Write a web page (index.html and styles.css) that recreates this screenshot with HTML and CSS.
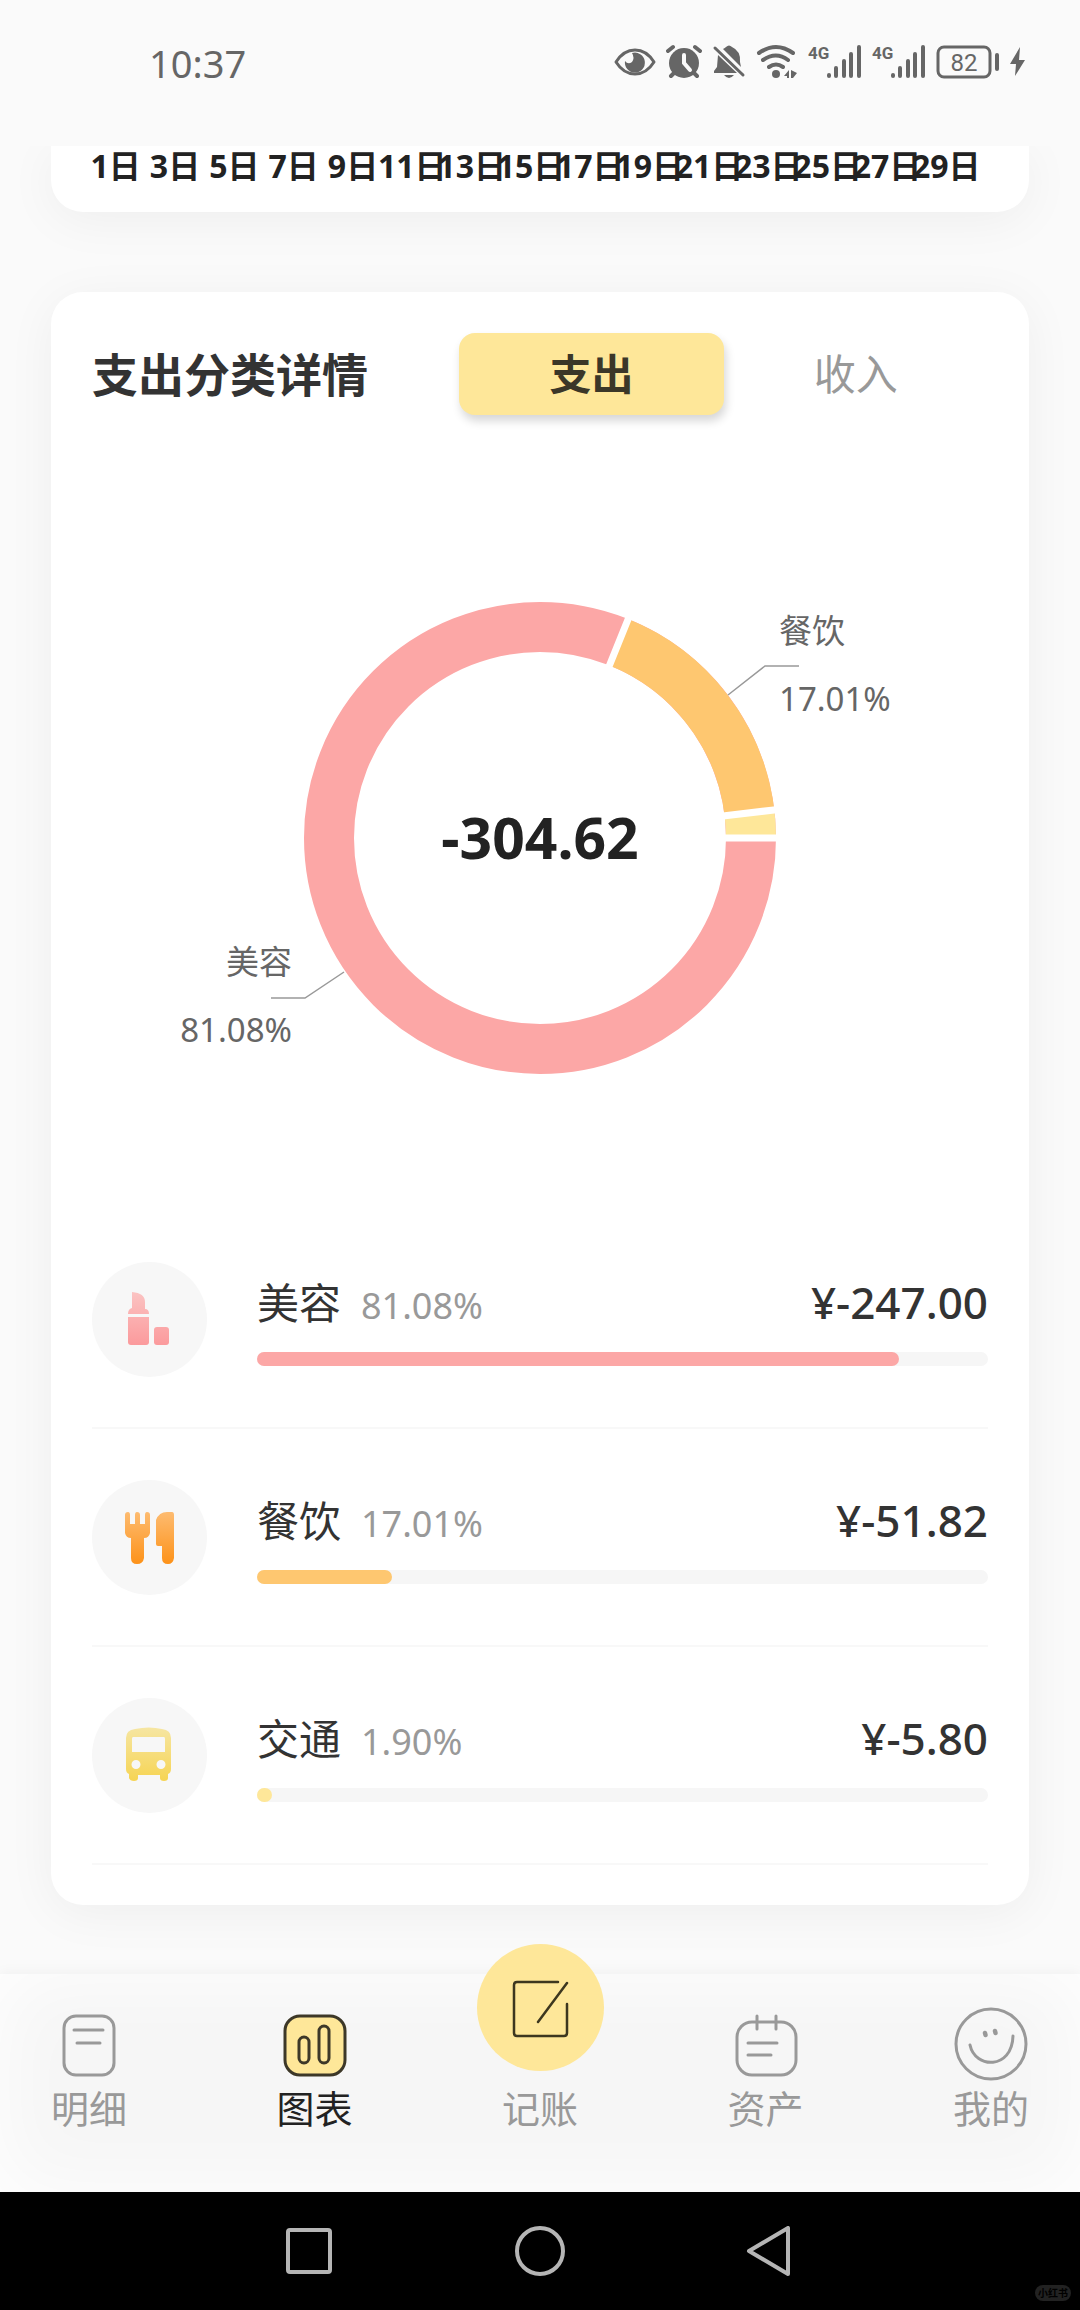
FILE: index.html
```html
<!DOCTYPE html>
<html lang="zh-CN">
<head>
<meta charset="utf-8">
<meta name="viewport" content="width=device-width, initial-scale=1">
<title>图表</title>
<link rel="stylesheet" href="styles.css">
</head>
<body>
<header class="status">
  <time class="clock">10:37</time>
  <div class="status-icons">
    <svg width="42" height="36" viewBox="0 0 42 36" aria-hidden="true">
      <path d="M2 18C12 2 30 2 40 18C30 34 12 34 2 18Z" fill="none" stroke="#666" stroke-width="3" stroke-linejoin="round"/>
      <path d="M18 9A10 10 0 1 1 11 17Q14 21 18 18Q21 14 18 9Z" fill="#666"/>
    </svg>
    <svg width="36" height="36" viewBox="0 0 36 36" aria-hidden="true">
      <circle cx="18" cy="19" r="15" fill="#666"/>
      <path d="M2 7L7 3M34 7L29 3M8 29L5 32M28 29L31 32" stroke="#666" stroke-width="4" stroke-linecap="round"/>
      <path d="M18 11V19L24 26" fill="none" stroke="#fafafa" stroke-width="4" stroke-linecap="round"/>
    </svg>
    <svg width="34" height="36" viewBox="0 0 34 36" aria-hidden="true">
      <path d="M6 11L25 29H2V27L5 23ZM11 5Q13 4 14 3Q17 0 20 3Q29 7 28 18L29 23Z" fill="#666"/>
      <path d="M12 31H22Q17 37 12 31Z" fill="#666"/>
      <path d="M3 4L31 31" stroke="#666" stroke-width="3" stroke-linecap="round"/>
    </svg>
    <svg width="42" height="36" viewBox="0 0 42 36" aria-hidden="true">
      <path d="M3 9Q20 -3 37 9M7 16Q20 7 32 16M13 23Q20 18 27 23" fill="none" stroke="#666" stroke-width="4" stroke-linecap="round"/>
      <circle cx="20" cy="30" r="4" fill="#666"/>
      <path d="M33 26V34H31V32H28ZM35 26L41 29L37 34H35Z" fill="#666"/>
    </svg>
    <svg class="signal" width="54" height="36" viewBox="0 0 54 36" aria-label="4G">
      <text x="0" y="15">4G</text>
      <path d="M21 31V32M28 24V32M36 17V32M43 10V32M51 3V32" stroke="#666" stroke-width="4" stroke-linecap="round"/>
    </svg>
    <svg class="signal" width="54" height="36" viewBox="0 0 54 36" aria-label="4G">
      <text x="0" y="15">4G</text>
      <path d="M21 31V32M28 24V32M36 17V32M43 10V32M51 3V32" stroke="#666" stroke-width="4" stroke-linecap="round"/>
    </svg>
    <svg class="battery" width="64" height="36" viewBox="0 0 64 36" aria-label="82%">
      <rect x="2" y="3" width="52" height="30" rx="6" fill="none" stroke="#666" stroke-width="3"/>
      <text x="28" y="27" text-anchor="middle">82</text>
      <path d="M61 11V25" stroke="#666" stroke-width="4" stroke-linecap="round"/>
    </svg>
    <svg width="16" height="36" viewBox="0 0 16 36" aria-hidden="true">
      <path d="M10 3L0 20H6L5 32L15 16H9Z" fill="#666"/>
    </svg>
  </div>
</header>

<main class="content">
  <section class="card card-days">
    <ol class="days">
      <li>1日</li><li>3日</li><li>5日</li><li>7日</li><li>9日</li><li>11日</li><li>13日</li><li>15日</li><li>17日</li><li>19日</li><li>21日</li><li>23日</li><li>25日</li><li>27日</li><li>29日</li>
    </ol>
  </section>

  <section class="card card-detail">
    <div class="card-head">
      <h1 class="title">支出分类详情</h1>
      <div class="tabs">
        <button class="tab tab-active" type="button">支出</button>
        <button class="tab" type="button">收入</button>
      </div>
    </div>

    <svg class="donut" viewBox="0 -1 896 796" role="img" aria-label="支出占比">
      <g fill="none" stroke-width="50">
        <circle cx="448" cy="422" r="211" stroke="#fca7a6"/>
        <path d="M526.8 226.300A211 211 0 0 1 657.500 396.900" stroke="#fec770"/>
        <path d="M657.500 396.900A211 211 0 0 1 659 422" stroke="#fee799"/>
      </g>
      <path d="M630 422H688M628.700 400.300L686.300 393.400M515.900 253.200L537.600 199.500" stroke="#fff" stroke-width="7"/>
      <path d="M636 279L673 250H707M252 556L213 582H179" fill="none" stroke="#999" stroke-width="1.500"/>
      <text class="donut-total" x="448" y="443">-304.62</text>
      <text class="donut-label" x="687" y="227">餐饮</text>
      <text class="donut-label" x="687" y="295">17.01%</text>
      <text class="donut-label end" x="200" y="558">美容</text>
      <text class="donut-label end" x="200" y="626">81.08%</text>
    </svg>

    <ul class="list">
      <li class="row">
        <svg class="badge" viewBox="0 0 115 115" aria-hidden="true">
          <defs><linearGradient id="pink" gradientUnits="userSpaceOnUse" x1="0" y1="29" x2="0" y2="83"><stop offset="0" stop-color="#fbc4c3"/><stop offset="1" stop-color="#fb9a9c"/></linearGradient></defs>
          <g fill="url(#pink)">
            <path d="M40 30Q53 31 53 40V47Q57 47 57 52H36Q36 47 40 46Z"/>
            <path d="M36 55H57V80Q57 83 54 83H39Q36 83 36 80Z"/>
            <rect x="62" y="65" width="15" height="18" rx="3"/>
          </g>
        </svg>
        <div class="info">
          <div class="line"><span class="name">美容</span><span class="pct">81.08%</span><span class="amount">¥-247.00</span></div>
          <div class="track"><div class="fill pink" style="width:87.8%"></div></div>
        </div>
      </li>
      <li class="row">
        <svg class="badge" viewBox="0 0 115 115" aria-hidden="true">
          <defs><linearGradient id="orange" gradientUnits="userSpaceOnUse" x1="0" y1="32" x2="0" y2="84"><stop offset="0" stop-color="#fdbb70"/><stop offset="1" stop-color="#fd9219"/></linearGradient></defs>
          <g fill="url(#orange)">
            <path d="M33 35Q33 32 36 32Q38 32 38 35V44H43V35Q43 32 45 32Q48 32 48 35V44H53V35Q53 32 55 32Q58 32 58 35V53Q57 58 52 58V78Q51 84 45 84Q39 84 39 78V58Q34 58 33 53Z"/>
            <path d="M64 40Q67 32 75 32H80Q82 32 82 35V78Q81 84 76 84Q70 84 70 78V66H66Q64 66 64 64Z"/>
          </g>
        </svg>
        <div class="info">
          <div class="line"><span class="name">餐饮</span><span class="pct">17.01%</span><span class="amount">¥-51.82</span></div>
          <div class="track"><div class="fill orange" style="width:18.4%"></div></div>
        </div>
      </li>
      <li class="row">
        <svg class="badge" viewBox="0 0 115 115" aria-hidden="true">
          <defs><linearGradient id="yellow" gradientUnits="userSpaceOnUse" x1="0" y1="29" x2="0" y2="83"><stop offset="0" stop-color="#f6e6a3"/><stop offset="1" stop-color="#f6d453"/></linearGradient></defs>
          <path fill="url(#yellow)" fill-rule="evenodd" d="M34 40Q34 32 43 31Q57 28 70 31Q79 32 79 40V71Q79 75 76 76V80Q76 83 72 83Q68 83 68 80V77H46V80Q46 83 42 83Q38 83 37 80V76Q34 75 34 71ZM41 39Q40 39 40 41V54H73V41Q73 39 72 39ZM44 62A4.500 4.500 0 1 0 44 71A4.500 4.500 0 1 0 44 62ZM69 62A4.500 4.500 0 1 0 69 71A4.500 4.500 0 1 0 69 62Z"/>
        </svg>
        <div class="info">
          <div class="line"><span class="name">交通</span><span class="pct">1.90%</span><span class="amount">¥-5.80</span></div>
          <div class="track"><div class="fill yellow" style="width:2%"></div></div>
        </div>
      </li>
    </ul>
  </section>
</main>

<nav class="nav">
  <a class="nav-item" href="#">
    <svg width="74" height="74" viewBox="0 0 74 74" fill="none" stroke="#999" stroke-width="3" stroke-linecap="round" aria-hidden="true"><rect x="12" y="9" width="50" height="59" rx="12"/><path d="M22 23H51M25 36H48"/></svg>
    <span>明细</span>
  </a>
  <a class="nav-item current" href="#" aria-current="page">
    <svg width="74" height="74" viewBox="0 0 74 74" fill="none" stroke="#3d3828" stroke-width="3" aria-hidden="true"><rect x="7" y="9" width="60" height="59" rx="15" fill="#fee799"/><rect x="21" y="30" width="10" height="26" rx="5"/><rect x="41" y="19" width="10" height="37" rx="5"/></svg>
    <span>图表</span>
  </a>
  <a class="nav-item" href="#">
    <svg class="add" viewBox="0 0 127 127" aria-hidden="true"><circle cx="63.500" cy="63.500" r="63.500" fill="#fee799"/><path d="M81 38H40Q37 38 37 41V89Q37 92 40 92H87Q90 92 90 89V60M90 39L61 78" fill="none" stroke="#3d371f" stroke-width="2.500" stroke-linecap="round"/></svg>
    <span>记账</span>
  </a>
  <a class="nav-item" href="#">
    <svg width="74" height="74" viewBox="0 0 74 74" fill="none" stroke="#999" stroke-width="3" stroke-linecap="round" aria-hidden="true"><rect x="8" y="15" width="59" height="53" rx="15"/><path d="M28 9V22M47 9V22M19 36H48M19 48H42"/></svg>
    <span>资产</span>
  </a>
  <a class="nav-item" href="#">
    <svg width="74" height="74" viewBox="0 0 74 74" fill="none" stroke="#999" stroke-width="3" stroke-linecap="round" aria-hidden="true"><circle cx="37" cy="37" r="35"/><path d="M16 38C21 62 58 63 59 29"/><path d="M31 26L31.500 28M41 24L41.500 26" stroke-width="4.500"/></svg>
    <span>我的</span>
  </a>
</nav>

<footer class="sysbar">
  <button type="button" aria-label="最近"><svg width="50" height="50" viewBox="0 0 50 50"><rect x="4" y="4" width="42" height="42" rx="2"/></svg></button>
  <button type="button" aria-label="主页"><svg width="50" height="50" viewBox="0 0 50 50"><circle cx="25" cy="25" r="23"/></svg></button>
  <button type="button" aria-label="返回"><svg width="50" height="50" viewBox="0 0 50 50"><path d="M42 2V48L3 25Z" stroke-linejoin="round"/></svg></button>
  <span class="mark">小红书</span>
</footer>
</body>
</html>
```
FILE: styles.css
```css
* {
  box-sizing: border-box;
}

body {
  margin: 0;
  min-height: 100vh;
  display: flex;
  flex-direction: column;
  background: #fafafa;
  color: #333;
  font-family: "Noto Sans", "Noto Sans CJK SC", sans-serif;
}

ul,
ol {
  margin: 0;
  padding: 0;
  list-style: none;
}

button {
  border: 0;
  padding: 0;
  background: none;
  font: inherit;
}

.status {
  height: 146px;
  padding: 44px 54px 0 149px;
  display: flex;
  justify-content: space-between;
  align-items: flex-start;
}

.clock {
  font-size: 38px;
  line-height: 38px;
  color: #666;
}

.status-icons {
  display: flex;
  gap: 10px;
}

.signal text {
  font: 700 17px "Roboto", sans-serif;
  fill: #666;
}

.battery text {
  font: 400 24px "Roboto", sans-serif;
  fill: #666;
}

.content {
  flex: 1;
  overflow: hidden;
  padding: 0 51px 68px;
}

.card {
  background: #fff;
  border-radius: 32px;
  padding: 0 41px;
  box-shadow: 0 8px 50px rgba(0, 0, 0, 0.05);
}

.card-days {
  border-radius: 0 0 32px 32px;
  padding: 0 53px 26px 35px;
  margin-bottom: 80px;
}

.days {
  display: grid;
  grid-template-columns: repeat(15, minmax(0, 1fr));
  font-size: 32px;
  line-height: 40px;
  font-weight: 700;
  color: #222;
}

.days li {
  display: flex;
  justify-content: center;
  white-space: nowrap;
}

.card-detail {
  padding-top: 41px;
  padding-bottom: 40px;
}

.card-head {
  display: flex;
  justify-content: space-between;
  align-items: center;
}

.title {
  margin: 0;
  font-size: 46px;
  line-height: 60px;
  font-weight: 700;
}

.tabs {
  flex: 0 0 59%;
  display: grid;
  grid-template-columns: 1fr 1fr;
}

.tab {
  height: 82px;
  border-radius: 16px;
  font-size: 42px;
  line-height: 60px;
  color: #999;
}

.tab-active {
  background: #fee799;
  color: #3b3728;
  font-weight: 700;
  box-shadow: 2px 6px 10px rgba(0, 0, 0, 0.16);
}

.donut {
  display: block;
  width: 100%;
}

.donut-total {
  font-size: 57px;
  font-weight: 700;
  text-anchor: middle;
  fill: #222;
}

.donut-label {
  font-size: 33px;
  fill: #666;
}

.end {
  text-anchor: end;
}

.row {
  display: flex;
  align-items: center;
  gap: 50px;
  height: 218px;
  border-bottom: 2px solid #f8f8f8;
}

.badge {
  flex: none;
  width: 115px;
  height: 115px;
  border-radius: 50%;
  background: #f7f7f7;
}

.info {
  flex: 1;
}

.line {
  display: flex;
  align-items: baseline;
  line-height: 60px;
  margin-bottom: 16px;
}

.name {
  font-size: 42px;
}

.pct {
  margin-left: 20px;
  font-size: 36px;
  color: #999;
}

.amount {
  margin-left: auto;
  font-size: 44px;
  font-weight: 500;
}

.track {
  height: 14px;
  border-radius: 7px;
  background: #f6f6f6;
}

.fill {
  height: 14px;
  border-radius: 7px;
}

.pink {
  background: #fca7a6;
}

.orange {
  background: #fec770;
}

.yellow {
  background: #fee799;
}

.nav {
  height: 218px;
  padding: 0 31px 57px;
  display: flex;
  justify-content: space-between;
  align-items: flex-end;
  background: #f6f6f6;
  box-shadow: inset 0 0 80px #fff, 0 -2px 12px rgba(0, 0, 0, 0.04);
}

.nav-item {
  width: 116px;
  display: flex;
  flex-direction: column;
  align-items: center;
  font-size: 38px;
  line-height: 54px;
  color: #999;
  text-decoration: none;
}

.current {
  color: #222;
}

.add {
  width: 127px;
  height: 127px;
  margin-bottom: 10px;
}

.sysbar {
  position: relative;
  height: 118px;
  display: flex;
  justify-content: center;
  align-items: center;
  gap: 181px;
  background: #000;
}

.sysbar svg {
  display: block;
  fill: none;
  stroke: #b5b5b5;
  stroke-width: 4px;
}

.mark {
  position: absolute;
  right: 9px;
  bottom: 9px;
  padding: 0 3px;
  border-radius: 8px;
  background: #222;
  color: #000;
  font-size: 10px;
  line-height: 16px;
  font-weight: 700;
}
```
